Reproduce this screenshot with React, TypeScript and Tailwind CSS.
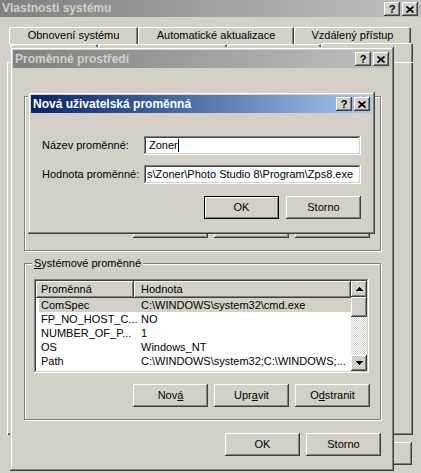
import type { ReactNode } from "react";

const raised =
  "shadow-[inset_-1px_-1px_#404040,inset_1px_1px_#ffffff,inset_-2px_-2px_#808080,inset_2px_2px_#d4d0c8]";
const frame =
  "shadow-[inset_-1px_-1px_#404040,inset_1px_1px_#d4d0c8,inset_-2px_-2px_#808080,inset_2px_2px_#ffffff]";
const sunken =
  "shadow-[inset_-1px_-1px_#ffffff,inset_1px_1px_#808080,inset_-2px_-2px_#d4d0c8,inset_2px_2px_#404040]";

const CaptionButtons = () => (
  <div className="flex gap-[2px]">
    <div className={`w-[16px] h-[14px] bg-[#d4d0c8] ${raised} flex items-center justify-center`}>
      <span className="text-[11px] font-bold leading-none text-black">?</span>
    </div>
    <div className={`w-[16px] h-[14px] bg-[#d4d0c8] ${raised} flex items-center justify-center`}>
      <svg width="8" height="7" viewBox="0 0 8 7">
        <path d="M0.5 0.5L7.5 6.5M7.5 0.5L0.5 6.5" stroke="#000" strokeWidth="1.7" />
      </svg>
    </div>
  </div>
);

const TitleBar = ({ title, active }: { title: string; active?: boolean }) => (
  <div
    className={`h-[18px] flex items-center justify-between pl-[2px] pr-[2px] bg-linear-to-r ${
      active ? "from-[#0a246a] to-[#a6caf0] text-white" : "from-[#808080] to-[#c0c0c0] text-[#d4d0c8]"
    }`}
  >
    <span className="text-[12px] font-bold leading-[18px]">{title}</span>
    <CaptionButtons />
  </div>
);

const Button = ({ children, isDefault }: { children: ReactNode; isDefault?: boolean }) => (
  <div
    className={`w-[75px] h-[23px] flex items-center justify-center bg-[#d4d0c8] text-black ${
      isDefault
        ? "border border-black shadow-[inset_1px_1px_#ffffff,inset_-1px_-1px_#808080]"
        : raised
    }`}
  >
    {children}
  </div>
);

const GroupBox = ({ label, className, children }: { label: ReactNode; className: string; children: ReactNode }) => (
  <div className={`relative border border-[#808080] shadow-[inset_1px_1px_#ffffff,1px_1px_#ffffff] ${className}`}>
    <span className="absolute -top-[7px] left-[7px] px-[2px] bg-[#d4d0c8] leading-[13px]">{label}</span>
    {children}
  </div>
);

const Arrow = ({ down }: { down?: boolean }) => (
  <svg width="7" height="4" viewBox="0 0 7 4" shapeRendering="crispEdges" className={down ? "rotate-180" : ""}>
    <path d="M3 0h1v1h-1zM2 1h3v1h-3zM1 2h5v1h-5zM0 3h7v1h-7z" fill="#000" />
  </svg>
);

const rows = [
  ["ComSpec", "C:\\WINDOWS\\system32\\cmd.exe"],
  ["FP_NO_HOST_C...", "NO"],
  ["NUMBER_OF_P...", "1"],
  ["OS", "Windows_NT"],
  ["Path", "C:\\WINDOWS\\system32;C:\\WINDOWS;..."],
];

const VarList = () => (
  <div className={`w-[335px] h-[94px] bg-white p-[2px] flex ${sunken}`}>
    <div className="flex-1 flex flex-col overflow-hidden">
      <div className="flex h-[17px] shrink-0">
        <div className={`w-[98px] h-full bg-[#d4d0c8] ${raised} pl-[5px] leading-[17px]`}>Proměnná</div>
        <div className={`flex-1 h-full bg-[#d4d0c8] ${raised} pl-[7px] leading-[17px]`}>Hodnota</div>
      </div>
      {rows.map(([name, value], i) => (
        <div key={name} className={`flex h-[14px] ml-[3px] leading-[14px] ${i === 0 ? "bg-[#d4d0c8]" : ""}`}>
          <div className="w-[100px] pl-[2px] whitespace-nowrap">{name}</div>
          <div className="flex-1 pl-[2px] whitespace-nowrap overflow-hidden">{value}</div>
        </div>
      ))}
    </div>
    <div className="w-[16px] flex flex-col">
      <div className={`h-[16px] bg-[#d4d0c8] ${raised} flex items-center justify-center`}>
        <Arrow />
      </div>
      <div className={`h-[20px] bg-[#d4d0c8] ${raised}`} />
      <div className="flex-1 bg-[repeating-conic-gradient(#ffffff_0_25%,#d4d0c8_0_50%)] bg-[length:2px_2px]" />
      <div className={`h-[16px] bg-[#d4d0c8] ${raised} flex items-center justify-center`}>
        <Arrow down />
      </div>
    </div>
  </div>
);

const tab = "shadow-[inset_1px_1px_#ffffff,inset_-1px_0_#404040,inset_-2px_0_#808080] rounded-t-[2px] bg-[#d4d0c8]";

export default function App() {
  return (
    <div className="relative w-[421px] h-[473px] overflow-hidden bg-[#d4d0c8] text-black text-[11px] leading-[13px] font-['Liberation_Sans',Arial,sans-serif]">
      {/* Vlastnosti systému */}
      <div className="flex flex-col">
        <div className="h-[17px] flex justify-between pl-[2px] pr-[3px] bg-linear-to-r from-[#808080] to-[#c0c0c0] text-[#d4d0c8]">
          <span className="text-[12px] font-bold leading-[17px]">Vlastnosti systému</span>
          <div className="mt-[2px]">
            <CaptionButtons />
          </div>
        </div>
        <div className="mt-[10px] pl-[9px] flex h-[17px]">
          <div className={`w-[129px] ${tab} flex justify-center pt-[2px]`}>Obnovení systému</div>
          <div className={`w-[156px] ${tab} flex justify-center pt-[2px]`}>Automatické aktualizace</div>
          <div className={`w-[117px] ${tab} flex justify-center pt-[2px]`}>Vzdálený přístup</div>
        </div>
        <div className="-mt-[1px] pl-[10px] flex items-end h-[19px]">
          <div className={`w-[88px] h-[18px] ${tab}`} />
          <div className={`w-[129px] h-[18px] ${tab}`} />
          <div className={`w-[94px] h-[18px] ${tab}`} />
          <div className={`w-[92px] h-[19px] ${tab}`} />
        </div>
        <div className="ml-[7px] w-[406px] h-[373px] shadow-[inset_1px_1px_#ffffff,inset_-1px_-1px_#404040,inset_-2px_-2px_#808080]" />
        <div className="mt-[7px] flex justify-end gap-[6px] pr-[9px]">
          <Button>OK</Button>
          <Button>Storno</Button>
          <Button>Použít</Button>
        </div>
      </div>

      {/* Proměnné prostředí */}
      <div className={`absolute left-[10px] top-[47px] w-[384px] h-[424px] p-[3px] bg-[#d4d0c8] flex flex-col ${frame}`}>
        <TitleBar title="Proměnné prostředí" />
        <GroupBox
          label="Uživatelské proměnné pro Administrator"
          className="mt-[28px] ml-[11px] w-[357px] h-[155px] flex flex-col justify-end pb-[12px] pr-[10px]"
        >
          <div className="flex justify-end gap-[6px]">
            <Button>Nová...</Button>
            <Button>Upravit...</Button>
            <Button>Odstranit</Button>
          </div>
        </GroupBox>
        <GroupBox
          label={
            <>
              <span className="underline">S</span>ystémové proměnné
            </>
          }
          className="mt-[12px] ml-[11px] w-[357px] h-[157px] pt-[15px] pl-[9px] pr-[10px]"
        >
          <VarList />
          <div className="mt-[11px] flex justify-end gap-[6px]">
            <Button>
              <span>
                Nov<span className="underline">á</span>
              </span>
            </Button>
            <Button>
              <span>
                Upr<span className="underline">a</span>vit
              </span>
            </Button>
            <Button>
              <span>
                O<span className="underline">d</span>stranit
              </span>
            </Button>
          </div>
        </GroupBox>
        <div className="mt-[13px] flex justify-end gap-[6px] pr-[10px]">
          <Button>OK</Button>
          <Button>Storno</Button>
        </div>
      </div>

      {/* Nová uživatelská proměnná */}
      <div className={`absolute left-[28px] top-[92px] w-[347px] h-[142px] p-[3px] bg-[#d4d0c8] flex flex-col ${frame}`}>
        <TitleBar title="Nová uživatelská proměnná" active />
        <div className="mt-[23px] pl-[11px] flex items-center">
          <span className="w-[102px]">Název proměnné:</span>
          <div className={`w-[217px] h-[19px] bg-white ${sunken} pl-[5px] flex items-center`}>
            <span>Zoner</span>
            <span className="inline-block w-[1px] h-[13px] bg-black" />
          </div>
        </div>
        <div className="mt-[10px] pl-[11px] flex items-center">
          <span className="w-[102px]">Hodnota proměnné:</span>
          <div className={`w-[217px] h-[19px] bg-white ${sunken} pl-[3px] flex items-center overflow-hidden whitespace-nowrap`}>
            {"s\\Zoner\\Photo Studio 8\\Program\\Zps8.exe"}
          </div>
        </div>
        <div className="mt-[12px] flex justify-end gap-[7px] pr-[11px]">
          <Button isDefault>OK</Button>
          <Button>Storno</Button>
        </div>
      </div>
    </div>
  );
}
